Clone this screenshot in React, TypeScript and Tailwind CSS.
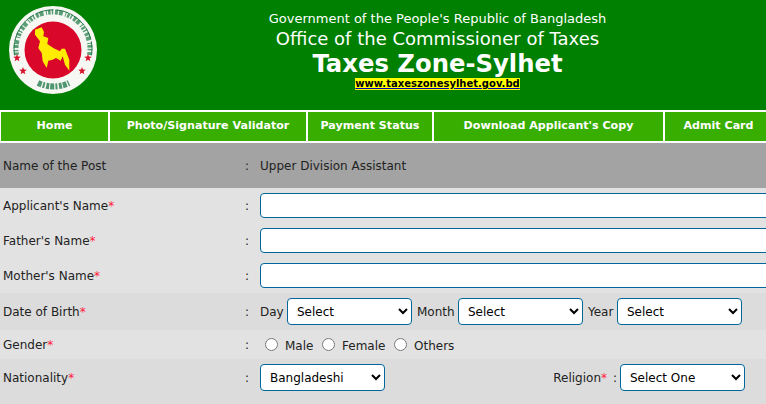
const bodyFont = "font-['DejaVu_Sans',sans-serif]";

function Star({ x, y }: { x: number; y: number }) {
    const pts: string[] = [];
    for (let i = 0; i < 10; i++) {
        const r = i % 2 === 0 ? 4 : 1.7;
        const a = (Math.PI / 5) * i - Math.PI / 2;
        pts.push(`${x + r * Math.cos(a)},${y + r * Math.sin(a)}`);
    }
    return <polygon points={pts.join(" ")} fill="#d8152f" />;
}

// viewBox is in page pixels, the emblem sits at 9,6 in the header
function Logo() {
    return (
        <svg width="88" height="88" viewBox="9 6 88 88" className="shrink-0">
            <circle cx="53" cy="50" r="44" fill="#f7f8f4" />
            {/* lettering around the ring, no Bengali font here so it is only a texture */}
            <path d="M 16.5 55 A 37 37 0 1 1 89.5 55" fill="none" stroke="#5c9e78" strokeWidth="5" strokeDasharray="2.5 1.2 1.5 1.8 3 1 4 2.5 1 1.2" />
            <path d="M 14.5 55 A 39 39 0 1 1 91.5 55" fill="none" stroke="#2a7a4c" strokeWidth="1" strokeDasharray="12 2.5 18 3" />
            <path d="M 38 83 A 36 36 0 0 0 69 83" fill="none" stroke="#4f9570" strokeWidth="6" strokeDasharray="4 1.2 2 1.5 3 1" />
            <circle cx="53" cy="50" r="28.5" fill="#d9082a" />
            <path
                d="M35 29.7 L41.7 27.3 L44 32 L43.3 36.3 L48.3 38 L47.3 44 L53.3 48 L60 51.3 L61.7 48.7 L65 48.7 L69.3 59.7 L69.3 70.7 L65 64.7 L62.7 56.3 L60.7 60.7 L56 58 L52.7 59.7 L48.3 60.7 L46.7 68 L42.7 61.3 L41.7 53 L38.3 48 L40 41.3 L35 34.7 Z"
                fill="#ffec00"
            />
            <Star x={17} y={58} />
            <Star x={23} y={71} />
            <Star x={88} y={58} />
            <Star x={82} y={71} />
        </svg>
    );
}

function NavItem({ label, width }: { label: string; width: string }) {
    return (
        <div className={`${width} shrink-0 h-[29px] bg-[#38ae00] flex items-center justify-center text-white font-bold text-[11.1px]`}>
            {label}
        </div>
    );
}

function Req() {
    return <span className="text-[#ff1a3c]">*</span>;
}

function Label({ children }: { children: React.ReactNode }) {
    return <div className="w-[245px] shrink-0 pl-[3px]">{children}</div>;
}

function Colon() {
    return <div className="w-[15px] shrink-0">:</div>;
}

function TextRow() {
    return <input className="block shrink-0 w-[700px] h-[25px] bg-white border border-[#00669c] rounded-[4px]" />;
}

function Pick({ value, width }: { value: string; width: string }) {
    return (
        <select defaultValue={value} className={`${width} h-[27px] shrink-0 bg-white border border-[#00669c] rounded-[4px] pl-[5px] text-[12px] text-black`}>
            <option>{value}</option>
        </select>
    );
}

function Radio({ label, width }: { label: string; width: string }) {
    return (
        <label className={`${width} shrink-0 flex items-center`}>
            <input type="radio" name="gender" className="m-0 ml-[5px] mr-[7px] w-[13px] h-[13px]" />
            <span className="mt-[2px]">{label}</span>
        </label>
    );
}

export default function App() {
    return (
        <div className={`w-[766px] h-[404px] overflow-hidden bg-white text-[#222] text-[12px] ${bodyFont}`}>
            {/* header */}
            <div className="h-[110px] bg-[#008000] flex pl-[9px] pt-[6px]">
                <Logo />
                <div className="flex-1 flex flex-col items-center text-white pt-[4px] pl-[12px]">
                    <div className="text-[13px] leading-[18px]">Government of the People's Republic of Bangladesh</div>
                    <div className="text-[18px] leading-[21px]">Office of the Commissioner of Taxes</div>
                    <div className="text-[24.3px] leading-[30px] font-bold">Taxes Zone-Sylhet</div>
                    <a className="bg-[#ffff00] text-black font-bold text-[10px] leading-[12px] underline decoration-[#0000c0] -mt-px">www.taxeszonesylhet.gov.bd</a>
                </div>
            </div>

            {/* nav */}
            <div className="flex gap-[2px] pl-px pt-[2px] pb-[2px]">
                <NavItem label="Home" width="w-[107px]" />
                <NavItem label="Photo/Signature Validator" width="w-[196px]" />
                <NavItem label="Payment Status" width="w-[124px]" />
                <NavItem label="Download Applicant's Copy" width="w-[229px]" />
                <NavItem label="Admit Card" width="w-[107px]" />
            </div>

            {/* form */}
            <div className="h-[45px] bg-[#a3a3a3] flex items-center">
                <Label>Name of the Post</Label>
                <Colon />
                <div>Upper Division Assistant</div>
            </div>
            <div className="h-[105px] bg-[#e2e2e2] flex flex-col">
                {["Applicant's Name", "Father's Name", "Mother's Name"].map((n) => (
                    <div key={n} className="h-[35px] flex items-center">
                        <Label>
                            {n}
                            <Req />
                        </Label>
                        <Colon />
                        <TextRow />
                    </div>
                ))}
            </div>
            <div className="h-[37px] bg-[#dcdcdc] flex items-center">
                <Label>
                    Date of Birth
                    <Req />
                </Label>
                <Colon />
                <div className="flex items-center">
                    <span className="w-[27px]">Day</span>
                    <Pick value="Select" width="w-[125px]" />
                    <span className="w-[46px] pl-[5px]">Month</span>
                    <Pick value="Select" width="w-[125px]" />
                    <span className="w-[34px] pl-[5px]">Year</span>
                    <Pick value="Select" width="w-[125px]" />
                </div>
            </div>
            <div className="h-[29px] bg-[#e2e2e2] flex items-center">
                <Label>
                    Gender
                    <Req />
                </Label>
                <Colon />
                <div className="flex items-center">
                    <Radio label="Male" width="w-[57px]" />
                    <Radio label="Female" width="w-[72px]" />
                    <Radio label="Others" width="w-[80px]" />
                </div>
            </div>
            <div className="h-[45px] bg-[#dcdcdc] flex items-start pt-[5px]">
                <div className="flex items-center h-[27px]">
                    <Label>
                        Nationality
                        <Req />
                    </Label>
                    <Colon />
                    <Pick value="Bangladeshi" width="w-[125px]" />
                    <div className="w-[222px] text-right">
                        Religion
                        <Req />
                    </div>
                    <div className="w-[13px] pl-[6px]">:</div>
                    <Pick value="Select One" width="w-[125px]" />
                </div>
            </div>
        </div>
    );
}
